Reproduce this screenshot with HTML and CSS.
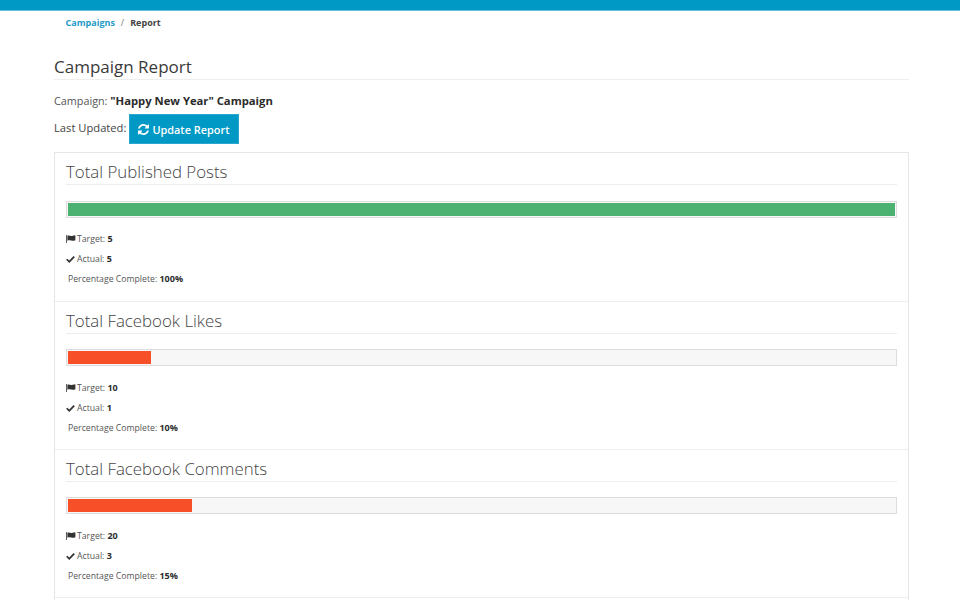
FILE: index.html
```html
<!DOCTYPE html>
<html lang="en">
<head>
<meta charset="utf-8">
<title>Campaign Report</title>
<link rel="stylesheet" href="styles.css">
</head>
<body>
<div class="topbar"></div>
<nav class="crumbs"><a href="#">Campaigns</a><span class="sep">/</span><span class="here">Report</span></nav>
<main class="page">
  <h1 class="title">Campaign Report</h1>
  <p class="campaign">Campaign: <b>"Happy New Year" Campaign</b></p>
  <div class="updated"><span>Last Updated:</span>
    <button class="btn"><svg class="ico-refresh" viewBox="0 0 1536 1536"><path fill="#fff" d="M1511 928q0 5-1 7-64 268-268 434.500T764 1536q-146 0-282.500-55T238 1324l-129 129q-19 19-45 19t-45-19-19-45V960q0-26 19-45t45-19h448q26 0 45 19t19 45-19 45L420 1142q71 66 161 102t187 36q134 0 250-65t186-179q11-17 53-117 8-23 30-23h192q13 0 22.500 9.500t9.500 22.500zm25-800v448q0 26-19 45t-45 19h-448q-26 0-45-19t-19-45 19-45l138-138q-148-137-349-137-134 0-250 65T332 500q-11 17-53 117-8 23-30 23H50q-13 0-22.500-9.500T18 608v-7q65-268 270-434.500T768 0q146 0 284 55.500T1297 212l130-129q19-19 45-19t45 19 19 45z"/></svg>Update Report</button>
  </div>
  <div class="card">
    <section class="metric">
      <h2 class="metric-title">Total Published Posts</h2>
      <div class="track"><div class="fill good" style="width:100%"></div></div>
      <ul class="stats">
        <li><svg class="ico-flag" viewBox="0 0 12 10"><path d="M0 0h1v10H0zM1.500 1C3.500-.2 5.500 2 8 1c1.500-.4 2.500-.6 3.500-.8V6.500c-3 1.500-5.500.5-7 .2-1-.2-2 0-3 .5z"/></svg>Target: <b>5</b></li>
        <li><svg class="ico-check" viewBox="0 0 10 8"><path d="M0 4.300 1.400 3l2.200 2.100L8.500 0 10 1.400 3.600 8z"/></svg>Actual: <b>5</b></li>
        <li class="pct">Percentage Complete: <b>100%</b></li>
      </ul>
    </section>
    <section class="metric">
      <h2 class="metric-title">Total Facebook Likes</h2>
      <div class="track"><div class="fill bad" style="width:10%"></div></div>
      <ul class="stats">
        <li><svg class="ico-flag" viewBox="0 0 12 10"><path d="M0 0h1v10H0zM1.500 1C3.500-.2 5.500 2 8 1c1.500-.4 2.500-.6 3.500-.8V6.500c-3 1.500-5.500.5-7 .2-1-.2-2 0-3 .5z"/></svg>Target: <b>10</b></li>
        <li><svg class="ico-check" viewBox="0 0 10 8"><path d="M0 4.300 1.400 3l2.200 2.100L8.500 0 10 1.400 3.600 8z"/></svg>Actual: <b>1</b></li>
        <li class="pct">Percentage Complete: <b>10%</b></li>
      </ul>
    </section>
    <section class="metric">
      <h2 class="metric-title">Total Facebook Comments</h2>
      <div class="track"><div class="fill bad" style="width:15%"></div></div>
      <ul class="stats">
        <li><svg class="ico-flag" viewBox="0 0 12 10"><path d="M0 0h1v10H0zM1.500 1C3.500-.2 5.500 2 8 1c1.500-.4 2.500-.6 3.500-.8V6.500c-3 1.500-5.500.5-7 .2-1-.2-2 0-3 .5z"/></svg>Target: <b>20</b></li>
        <li><svg class="ico-check" viewBox="0 0 10 8"><path d="M0 4.300 1.400 3l2.200 2.100L8.500 0 10 1.400 3.600 8z"/></svg>Actual: <b>3</b></li>
        <li class="pct">Percentage Complete: <b>15%</b></li>
      </ul>
    </section>
  </div>
</main>
</body>
</html>
```
FILE: styles.css
```css
* { box-sizing: border-box; }
html, body { margin: 0; height: 600px; overflow: hidden; }
body { background: #fff; font-family: "Open Sans", sans-serif; color: #333; }
.topbar { height: 11px; background: #0099c6; border-bottom: 1px solid #5fbfdc; }
.crumbs { padding: 6px 0 0 65.500px; height: 22px; font-size: 9px; line-height: 12px; font-weight: 700; }
.crumbs a { color: #1f9bc9; text-decoration: none; }
.crumbs .sep { color: #777; font-weight: 400; padding: 0 6px; }
.crumbs .here { color: #444; }
.page { padding: 0 51px 0 54px; }
.title { margin: 22px 0 0; height: 25px; font-size: 17px; line-height: 24px; font-weight: 400; color: #3a3a3a; border-bottom: 1px solid #eee; }
.campaign { margin: 13px 0 0; font-size: 10.800px; line-height: 15px; color: #555; }
.campaign b { color: #2b2b2b; font-size: 11.250px; }
.updated { margin-top: 6px; display: flex; gap: 3px; font-size: 11.200px; line-height: 15px; color: #444; }
.updated span { padding-top: 6px; }
.btn { display: flex; align-items: center; gap: 3px; height: 30px; padding: 0 9px 0 8px; background: #0099c6; border: 1px solid #2aa7cf; color: #fff; font: 600 10.900px "Open Sans", sans-serif; }
.ico-refresh { width: 11px; height: 11px; }
.card { margin-top: 8px; border: 1px solid #e6e6e6; height: 460px; }
.metric { height: 148px; padding: 8px 11px 0; border-bottom: 1px solid #eee; }
.metric:first-child { height: 149px; }
.metric-title { margin: 0; height: 24px; font-size: 16.850px; line-height: 21px; font-weight: 300; color: #444; border-bottom: 1px solid #eee; }
.track { margin-top: 15px; height: 17px; padding: 1px; background: #f7f7f7; border: 1px solid #ddd; }
.metric:first-child .track { margin-top: 16px; }
.fill { height: 13px; }
.good { background: #4cb272; }
.bad { background: #f74f28; }
.stats { list-style: none; margin: 12px 0 0; padding: 0; font-size: 8.700px; color: #555; }
.metric:first-child .stats { margin-top: 11px; }
.stats li { height: 20px; line-height: 20px; display: flex; align-items: center; white-space: pre; }
.stats b { color: #2b2b2b; font-size: 9px; }
.stats .pct { padding-left: 2px; }
.ico-flag { width: 10px; height: 8px; margin-right: 1px; fill: #333; }
.ico-check { width: 9px; height: 7px; margin-right: 2px; fill: #333; }
```
